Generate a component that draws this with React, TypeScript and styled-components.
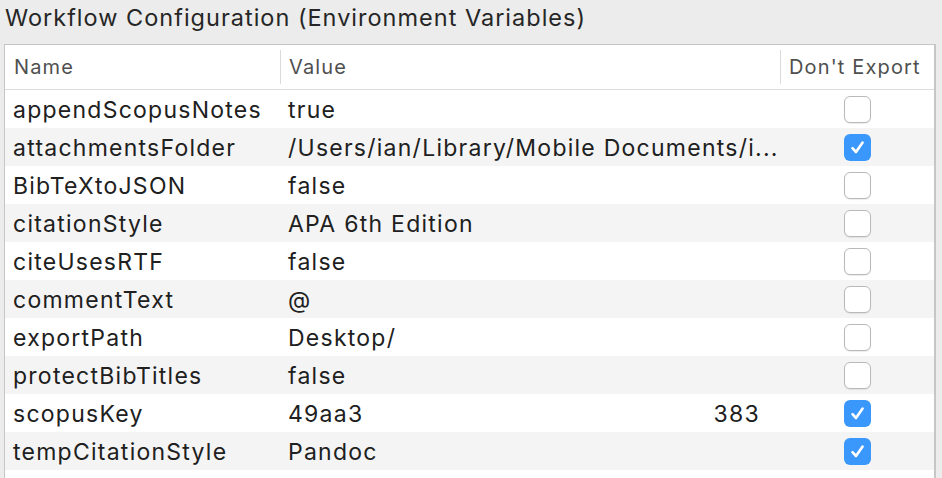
import React from 'react'
import styled, { createGlobalStyle } from 'styled-components'

const GlobalStyle = createGlobalStyle`
  html, body {
    margin: 0;
    padding: 0;
    background: #ececec;
    font-family: Inter, 'Noto Sans', sans-serif;
    -webkit-font-smoothing: antialiased;
  }
`

const Panel = styled.div`
  width: 942px;
  height: 478px;
  overflow: hidden;
  background: #ececec;
`

const Title = styled.div`
  height: 44px;
  padding-left: 5px;
  font-size: 23.5px;
  letter-spacing: 1px;
  line-height: 36px;
  color: #262626;
`

const Table = styled.div`
  margin-left: 4px;
  width: 929px;
  background: #fff;
  border: 1px solid #c6c6c6;
  border-right-width: 2px;
  border-bottom: none;
  height: 440px;
`

const HeaderRow = styled.div`
  display: grid;
  grid-template-columns: 275px 500px 1fr;
  height: 44px;
  border-bottom: 1px solid #dcdcdc;
`

const HeaderCell = styled.div<{ $divider?: boolean }>`
  display: flex;
  align-items: center;
  padding-left: 9px;
  font-size: 20px;
  letter-spacing: 1.15px;
  color: #4f4f4f;
  position: relative;
  ${(p) =>
    p.$divider &&
    `
    &::before {
      content: '';
      position: absolute;
      left: 0;
      top: 5px;
      bottom: 5px;
      width: 1px;
      background: #dadada;
    }
  `}
`

const Row = styled.div<{ $odd: boolean }>`
  display: grid;
  grid-template-columns: 275px 500px 1fr;
  height: 38px;
  background: ${(p) => (p.$odd ? '#f4f4f4' : '#fff')};
`

const Cell = styled.div`
  display: flex;
  align-items: center;
  padding-left: 8px;
  padding-top: 2px;
  font-size: 23px;
  letter-spacing: 1.25px;
  color: #202020;
  white-space: nowrap;
  overflow: hidden;
`

const ValueCell = styled(Cell)`
  justify-content: space-between;
  padding-right: 20px;
`

const CheckCell = styled.div`
  display: flex;
  align-items: center;
  justify-content: center;
  padding-left: 1px;
`

const Box = styled.div<{ $checked: boolean }>`
  width: 27px;
  height: 27px;
  box-sizing: border-box;
  border-radius: 6px;
  display: flex;
  align-items: center;
  justify-content: center;
  background: ${(p) => (p.$checked ? '#3a97fb' : '#fff')};
  border: ${(p) => (p.$checked ? 'none' : '1px solid #b9b9b9')};
  box-shadow: ${(p) => (p.$checked ? 'none' : '0 1px 1px rgba(0,0,0,0.08)')};
`

const Check = () => (
  <svg width="17" height="17" viewBox="0 0 17 17">
    <path
      d="M3.5 9.2 L7 13 L13.6 3.6"
      fill="none"
      stroke="#fff"
      strokeWidth="2.6"
      strokeLinecap="round"
      strokeLinejoin="round"
    />
  </svg>
)

interface Variable {
  name: string
  value: string
  tail?: string
  noExport: boolean
}

const variables: Variable[] = [
  { name: 'appendScopusNotes', value: 'true', noExport: false },
  {
    name: 'attachmentsFolder',
    value: '/Users/ian/Library/Mobile Documents/i...',
    noExport: true,
  },
  { name: 'BibTeXtoJSON', value: 'false', noExport: false },
  { name: 'citationStyle', value: 'APA 6th Edition', noExport: false },
  { name: 'citeUsesRTF', value: 'false', noExport: false },
  { name: 'commentText', value: '@', noExport: false },
  { name: 'exportPath', value: 'Desktop/', noExport: false },
  { name: 'protectBibTitles', value: 'false', noExport: false },
  { name: 'scopusKey', value: '49aa3', tail: '383', noExport: true },
  { name: 'tempCitationStyle', value: 'Pandoc', noExport: true },
]

const App = () => (
  <Panel>
    <GlobalStyle />
    <Title>Workflow Configuration (Environment Variables)</Title>
    <Table>
      <HeaderRow>
        <HeaderCell>Name</HeaderCell>
        <HeaderCell $divider>Value</HeaderCell>
        <HeaderCell $divider>Don't Export</HeaderCell>
      </HeaderRow>
      {variables.map((v, i) => (
        <Row key={v.name} $odd={i % 2 === 1}>
          <Cell>{v.name}</Cell>
          <ValueCell>
            <span>{v.value}</span>
            {v.tail && <span>{v.tail}</span>}
          </ValueCell>
          <CheckCell>
            <Box $checked={v.noExport}>{v.noExport && <Check />}</Box>
          </CheckCell>
        </Row>
      ))}
    </Table>
  </Panel>
)

export default App
